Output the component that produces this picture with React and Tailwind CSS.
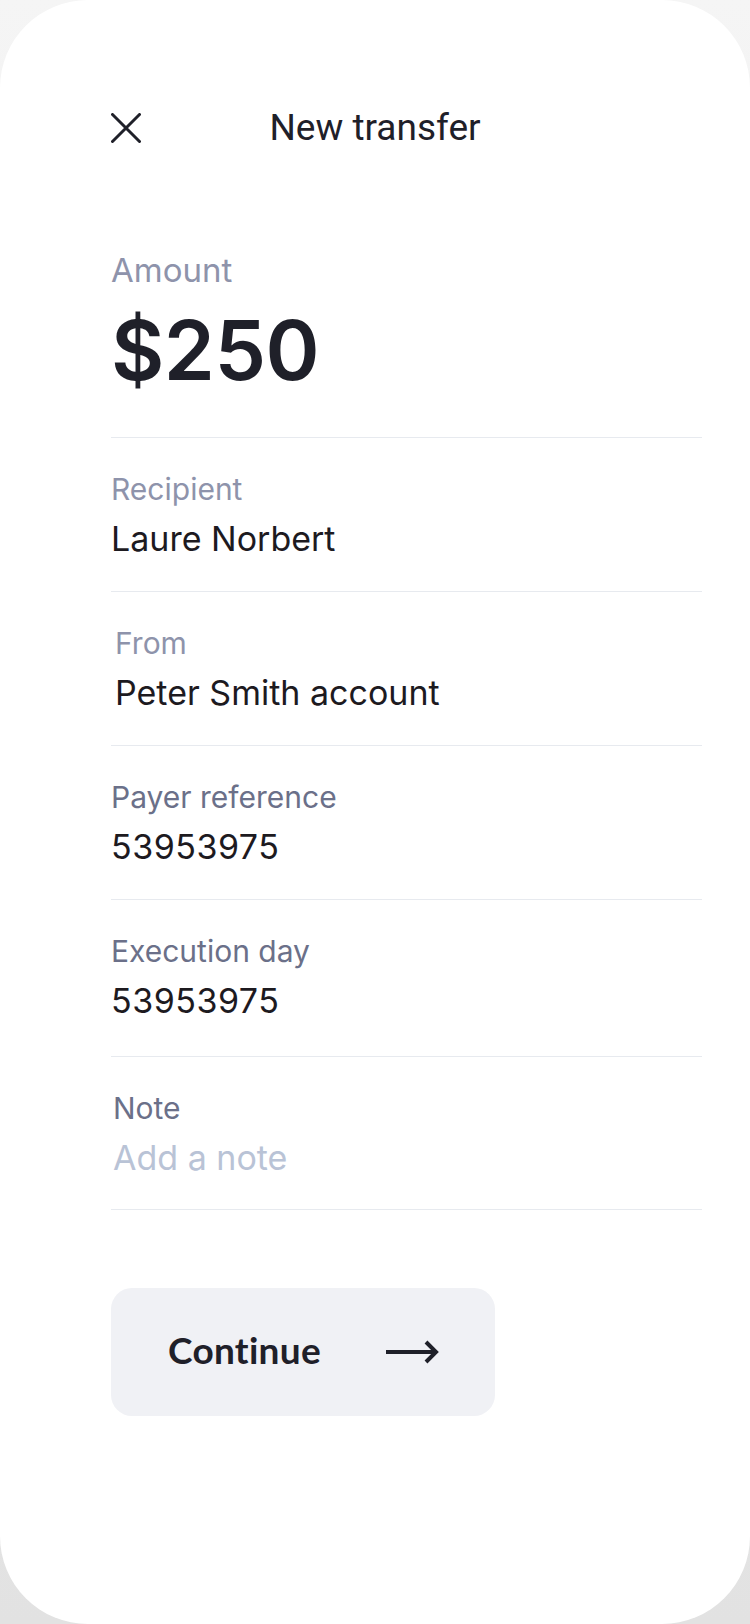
import React from 'react';

const rows = [
  { label: 'Recipient', value: 'Laure Norbert', tone: 'light', h: 'h-[154px]' },
  { label: 'From', value: 'Peter Smith account', tone: 'light', h: 'h-[154px]', indent: 'pl-[4px]' },
  { label: 'Payer reference', value: '53953975', tone: 'dark', h: 'h-[154px]', digits: true },
  { label: 'Execution day', value: '53953975', tone: 'dark', h: 'h-[157px]', digits: true },
  { label: 'Note', value: 'Add a note', tone: 'dark', h: 'h-[153px]', indent: 'pl-[2px]', placeholder: true },
];

function CloseIcon() {
  return (
    <svg width="30" height="30" viewBox="0 0 30 30" fill="none">
      <path d="M1.5 1.5 L28.5 28.5 M28.5 1.5 L1.5 28.5" stroke="#1f2029" strokeWidth="3" strokeLinecap="round" />
    </svg>
  );
}

function ArrowIcon() {
  return (
    <svg width="55" height="24" viewBox="0 0 55 24" fill="none">
      <path d="M1 12 H51 M41 2 L51 12 L41 22" stroke="#1f2029" strokeWidth="4" strokeLinejoin="miter" />
    </svg>
  );
}

function Field({ label, value, tone, h, indent = '', placeholder, digits }) {
  return (
    <div className={`${h} ${indent} border-b border-[#e7eaef] pt-[33px]`}>
      <div className={`text-[30px] leading-[36px] ${tone === 'light' ? 'text-[#8e93ab]' : 'text-[#6b7089]'}`}>
        {label}
      </div>
      <div
        className={`mt-[12px] text-[34px] leading-[40px] ${digits ? 'tracking-[0.5px]' : ''} ${
          placeholder ? 'text-[#b9c3d6]' : 'text-[#1d1a1f]'
        }`}
      >
        {value}
      </div>
    </div>
  );
}

export default function App() {
  return (
    <div className="w-[750px] h-[1624px] bg-gradient-to-b from-[#f5f5f5] to-[#e2e2e2]">
      <div className="h-full bg-white rounded-[88px] font-['Inter',sans-serif]">
        {/* header */}
        <div className="pt-[98px] px-[111px] grid grid-cols-[30px_1fr_30px] items-center h-[158px]">
          <button className="w-[30px] h-[30px] flex items-center justify-center">
            <CloseIcon />
          </button>
          <h1 className="text-center text-[37px] leading-[60px] font-normal text-[#1f2029] font-['Roboto',sans-serif]">
            New transfer
          </h1>
          <div />
        </div>

        <div className="pl-[111px] pr-[48px]">
          {/* amount */}
          <div className="pt-[94px] pb-[38px] border-b border-[#e7eaef]">
            <div className="text-[33px] leading-[36px] text-[#8e93ab]">Amount</div>
            <div className="mt-[15px] text-[82px] leading-[96px] font-semibold text-[#1f2029] tracking-[-0.5px]">
              $250
            </div>
          </div>

          {rows.map((r) => (
            <Field key={r.label} {...r} />
          ))}

          <button className="mt-[78px] w-[384px] h-[128px] rounded-[21px] bg-[#f0f1f5] flex items-center pl-[57px]">
            <span className="text-[37px] leading-[44px] font-bold text-[#1f2029] font-['Lato',sans-serif] tracking-[0.3px] -translate-y-[2px]">
              Continue
            </span>
            <span className="ml-[64px] flex">
              <ArrowIcon />
            </span>
          </button>
        </div>
      </div>
    </div>
  );
}
